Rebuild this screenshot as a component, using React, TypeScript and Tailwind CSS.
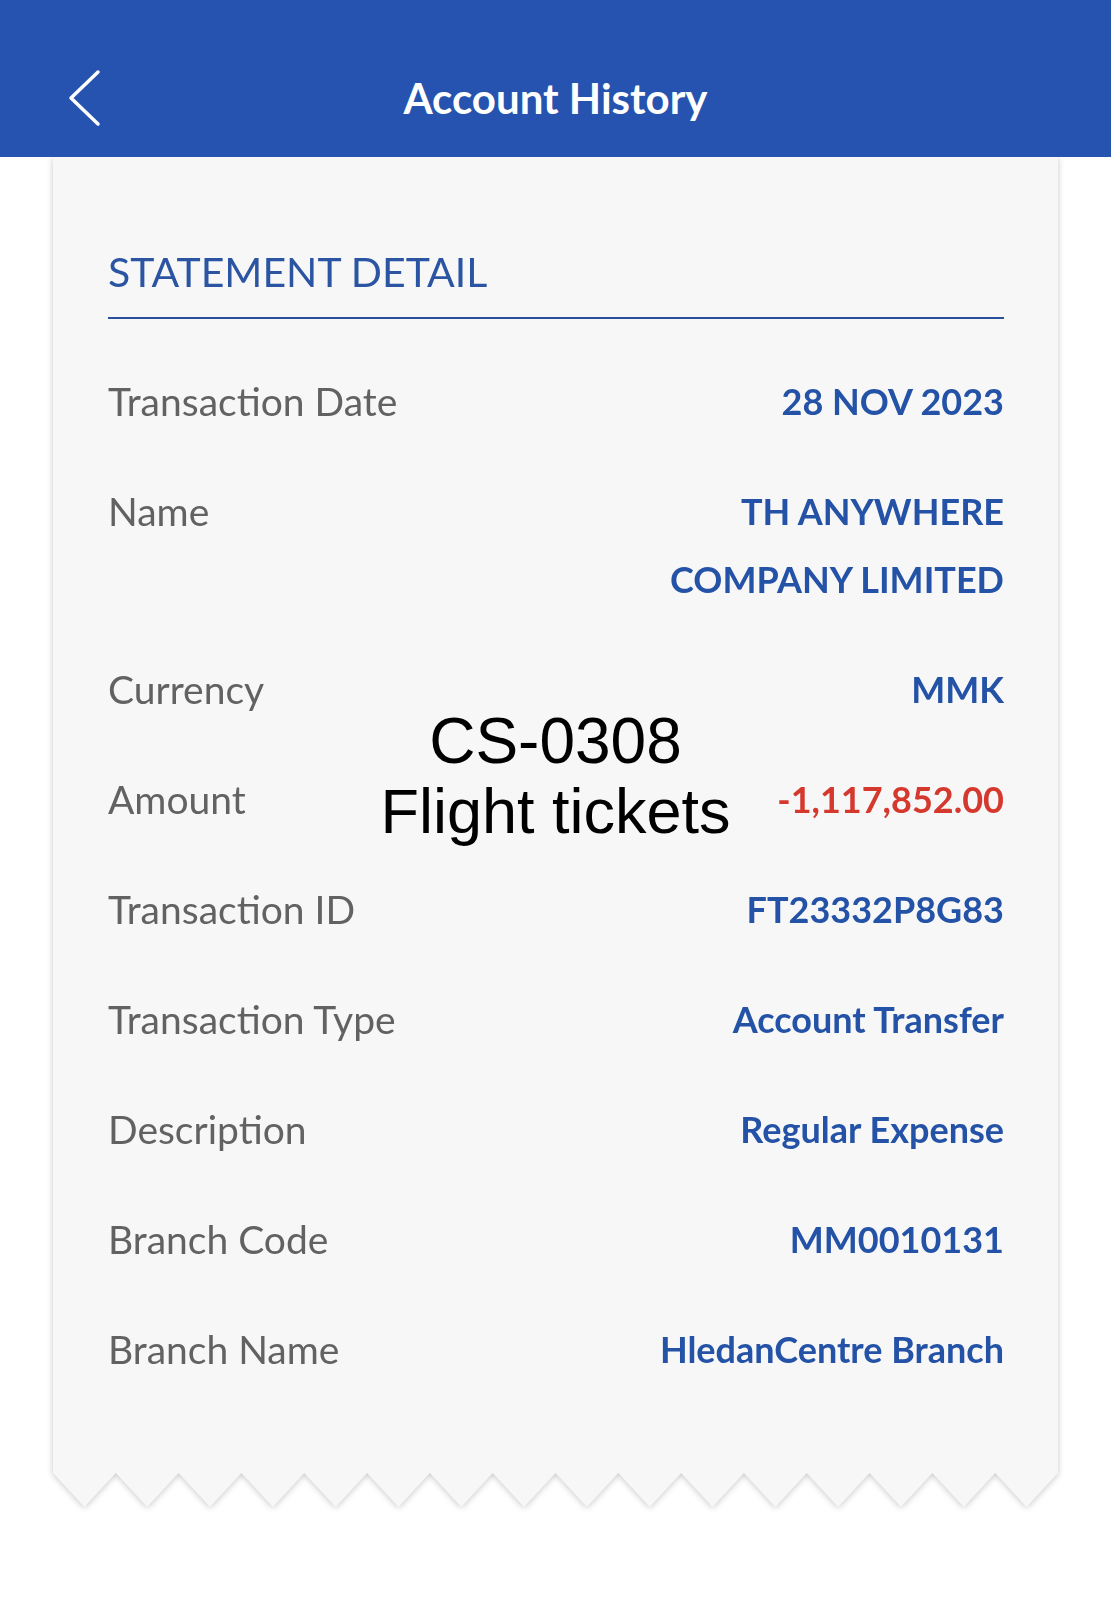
import React from "react";

const TEETH = 16;
const W = 1005;
const H = 34;
const tooth = W / TEETH;
const zigPoints: string = (() => {
  const pts: string[] = ["0,0"];
  for (let k = 0; k < TEETH; k++) {
    pts.push(`${(k * tooth + tooth / 2).toFixed(2)},${H}`);
    pts.push(`${((k + 1) * tooth).toFixed(2)},0`);
  }
  return pts.join(" ");
})();

type Row = { label: string; value: string[]; red?: boolean };

const rows: Row[] = [
  { label: "Transaction Date", value: ["28 NOV 2023"] },
  { label: "Name", value: ["TH ANYWHERE", "COMPANY LIMITED"] },
  { label: "Currency", value: ["MMK"] },
  { label: "Amount", value: ["-1,117,852.00"], red: true },
  { label: "Transaction ID", value: ["FT23332P8G83"] },
  { label: "Transaction Type", value: ["Account Transfer"] },
  { label: "Description", value: ["Regular Expense"] },
  { label: "Branch Code", value: ["MM0010131"] },
  { label: "Branch Name", value: ["HledanCentre Branch"] },
];

export default function App() {
  return (
    <div
      className="relative min-h-[1600px] w-[1111px] bg-white"
      style={{ fontFamily: "Lato, 'Noto Sans', sans-serif" }}
    >
      <header className="relative z-10 grid h-[157px] grid-cols-[1fr_auto_1fr] items-center bg-[#2553af] pt-[39px]">
        <div className="pl-[68px]">
          <svg width="34" height="58" viewBox="0 0 34 58" fill="none">
            <path
              d="M30 3 L3 29 L30 55"
              stroke="white"
              strokeWidth="3.5"
              strokeLinecap="round"
              strokeLinejoin="round"
            />
          </svg>
        </div>
        <h1 className="text-[42px] font-bold leading-[50px] text-white">Account History</h1>
        <div />
      </header>

      <div className="mx-[53px] drop-shadow-[0_1px_3px_rgba(0,0,0,0.22)]">
        <div className="bg-[#f7f7f7] pb-[90px] pl-[55px] pr-[54px] pt-[90px]">
          <div className="border-b-2 border-[#2a509c] pb-[20px]">
            <h2 className="text-[41px] leading-[50px] text-[#2b55a3]">STATEMENT DETAIL</h2>
          </div>
          <div className="mt-[48px] flex flex-col gap-[42px]">
            {rows.map((r) => (
              <div key={r.label} className="flex items-start justify-between">
                <span className="text-[39px] leading-[68px] text-[#626262]">{r.label}</span>
                <div className="flex flex-col items-end">
                  {r.value.map((v) => (
                    <span
                      key={v}
                      className={`text-[36px] font-bold leading-[68px] ${
                        r.red ? "text-[#d5392e]" : "text-[#2452a6]"
                      }`}
                    >
                      {v}
                    </span>
                  ))}
                </div>
              </div>
            ))}
          </div>
        </div>
        <svg
          className="block h-[34px] w-full"
          viewBox={`0 0 ${W} ${H}`}
          preserveAspectRatio="none"
        >
          <polygon points={zigPoints} fill="#f7f7f7" />
        </svg>
      </div>

      <div
        className="absolute left-0 right-0 top-[706px] text-center leading-[70px] text-black"
        style={{ fontFamily: "'Liberation Sans', Arial, sans-serif" }}
      >
        <div className="text-[64px]">CS-0308</div>
        <div className="text-[63px]">Flight tickets</div>
      </div>
    </div>
  );
}
